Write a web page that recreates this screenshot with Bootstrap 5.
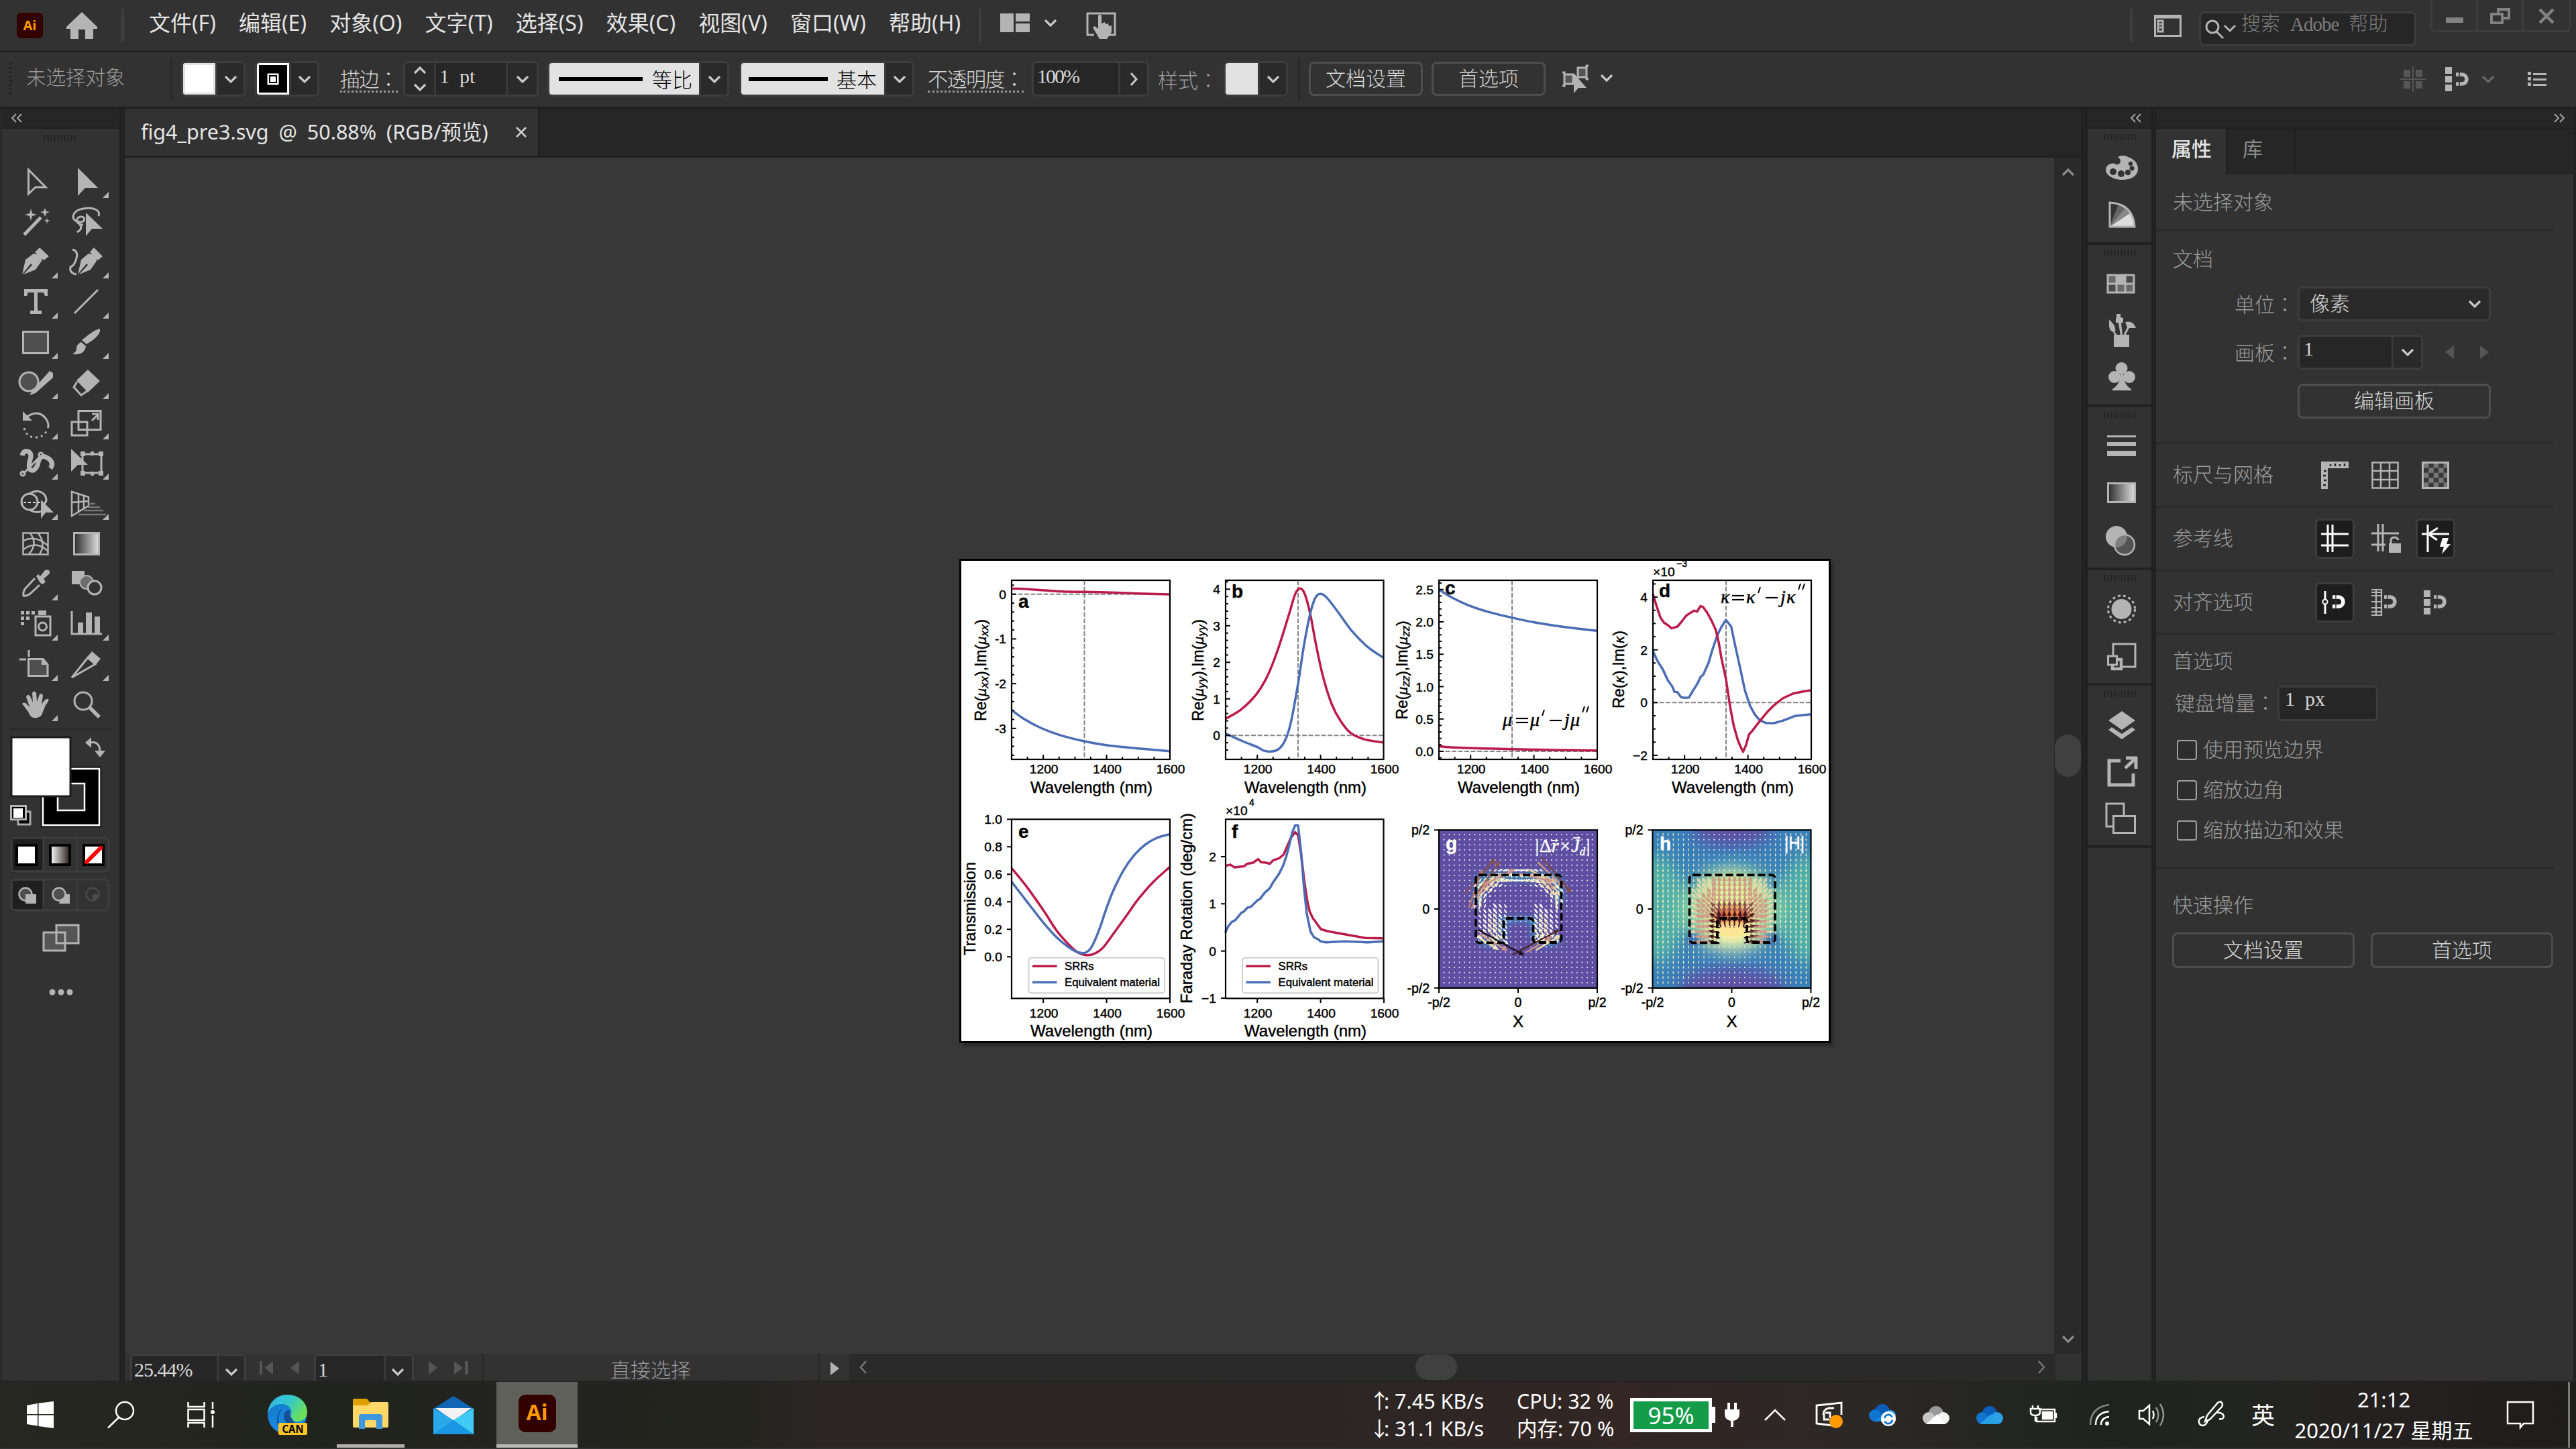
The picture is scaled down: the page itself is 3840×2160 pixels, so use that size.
<!DOCTYPE html>
<html lang="zh-CN">
<head>
<meta charset="utf-8">
<title>fig4_pre3.svg</title>
<meta name="viewport" content="width=device-width, initial-scale=1">
<link href="https://cdn.jsdelivr.net/npm/bootstrap@5.3.0/dist/css/bootstrap.min.css" rel="stylesheet">
<style>
html,body{width:3840px;height:2160px;overflow:hidden}
body{background:#323232;color:#9c9c9c;font:300 30px/36px "Liberation Serif","Noto Sans CJK SC",serif;margin:0}
svg{display:block;flex:none;overflow:visible}
.ui{font-family:"Noto Sans","Noto Sans CJK SC",sans-serif;font-weight:400;color:#e4e4e4}
.lt{color:#d6d6d6}
.num{letter-spacing:0;word-spacing:7.5px}
.cl{font-family:"Noto Sans CJK TC",sans-serif;font-style:normal;-webkit-locale:"zh-TW";font-feature-settings:"locl" 0}
.ic{fill:#b4b4b4;stroke:none}
.ln{fill:none;stroke:#b4b4b4;stroke-width:3}
.topbar{height:78px;border-bottom:3px solid #222}
.menus{gap:34.2px;font-size:32px;margin-left:38px;padding-bottom:8px}
.vsep{width:4px;height:50px;background:#3f3f3f;flex:none}
.vsep2{width:3px;height:62px;background:#292929;flex:none}
.srch{width:324px;height:52px;margin:10px 21px 0 25px;background:#262626;border:3px solid #3d3d3d;border-radius:8px;color:#7d7d7d}
.winb{width:210px;height:48px;border:3px solid #3d3d3d;border-top:0;border-radius:0 0 8px 8px;margin-right:7px}
.winb>*{width:69px;border-right:3px solid #3d3d3d}
.winb>*:last-child{border:0}
.ctl{height:84px;border-bottom:3px solid #202020;padding-bottom:2px}
.bx{height:53px;border:3px solid #3d3d3d;border-radius:7px;background:#262626;overflow:hidden;flex:none}
.bx>*+*{border-left:3px solid #3a3a3a}
.sw{background:#e2e2e2;flex:none;height:100%}
.dd{background:#2a2a2a}
.obtn{border:3px solid #4e4e4e;border-radius:8px;color:#d6d6d6;flex:none;padding:0}
.dot{border-bottom:3px dotted #9a9a9a;line-height:34px}
.work{height:1896px}
.tools{width:178px;border-left:3px solid #292929;flex:none}
.phead{height:30px;background:#262626;border-bottom:2px solid #202020;flex:none}
.tgrid{display:grid;grid-template-columns:70px 70px;column-gap:6px;grid-auto-rows:60px;padding:49px 0 0 15px}
.gut{width:8px;background:#262626;border-left:3px solid #1f1f1f;border-right:2px solid #1f1f1f;flex:none}
.tabs{height:73px;background:#262626;border-bottom:3px solid #202020}
.dtab{width:619px;background:#323232;border-right:3px solid #202020;padding-left:24px;font-size:31px}
.stage{background:#383838;position:relative;flex:1}
.artb{position:absolute;left:1244px;top:598px;width:1299px;height:722px;background:#fff;border:3px solid #000;box-shadow:4px 5px 3px #2b2b2b}
.vbar{width:41px;background:#2a2a2a;flex:none}
.vth{width:39px;height:63px;border-radius:20px;background:#404040}
.stat{height:40px;overflow:hidden;background:#323232}
.stat .bx{height:50px;align-self:flex-start}
.hbar{background:#2a2a2a;width:1798px}
.hth{width:62px;height:38px;border-radius:19px;background:#404040}
.strip{width:97px;border-left:2px solid #1f1f1f;flex:none}
.props{width:626px;flex:none;border-right:4px solid #222}
.ptab{height:68px;background:#262626;flex:none}
.pt{padding-top:12px;border-right:3px solid #202020}
.hr2{height:3px;background:#2a2a2a;width:594px;margin:0;flex:none}
.ttl{padding-left:25px}
.on{width:59px;height:60px;background:#1d1d1d;border:3px solid #3d3d3d;border-radius:7px}
.cb{width:30px;height:30px;border:2.5px solid #a0a0a0;border-radius:4px;background:#2d2d2d}
.task{height:100px;background:linear-gradient(90deg,#272722 0,#21241c 12%,#23231f 20%,#22241d 28%,#2b2624 32%,#2b2625 52%,#332624 63%,#2c2826 72%,#1e241d 82%,#232421 88%,#24201f 94%,#1d1d1c 100%);border-top:2px solid #242424}
.tk{font:400 30.5px/41px "Noto Sans","Noto Sans CJK SC",sans-serif;color:#fff}
.arw{display:inline-block;width:15px;text-indent:-7px}
.aibg{width:121px;height:98px;background:#5f605a;border-bottom:5px solid #b9b8b5}
.aib{background:#330000;color:#ff9a00;font-family:"Open Sans",sans-serif;font-weight:700}
.fg text{font-family:"Liberation Sans",sans-serif;font-weight:400;fill:#000;stroke:#000;stroke-width:.45px}
.fg .wt{fill:#fff;stroke:#fff}
.fg .pl{font-weight:700;font-size:28px}
.fg .eq{font-family:"Liberation Serif",serif;font-style:italic;font-size:28px}
</style>
<script src="https://cdn.jsdelivr.net/npm/bootstrap@5.3.0/dist/js/bootstrap.bundle.min.js"></script>
</head>
<body>
<svg width="0" height="0" class="position-absolute"><defs>
<symbol id="dn" viewBox="0 0 20 14"><path d="M2 3l8 8 8-8" fill="none" stroke="#c8c8c8" stroke-width="3.2"/></symbol>
<symbol id="grip" viewBox="0 0 48 9"><path d="M1.5 0v9M6.500 0v9M11.500 0v9M16.500 0v9M21.500 0v9M26.500 0v9M31.500 0v9M36.500 0v9M41.500 0v9M46.500 0v9" stroke="#222" stroke-width="2"/></symbol>
<symbol id="dl" viewBox="0 0 18 14"><path d="M8 1L2 7l6 6M16 1l-6 6 6 6" fill="none" stroke="#aaa" stroke-width="1.8"/></symbol>
<symbol id="mag" viewBox="0 0 20 20"><path d="M0 3h9a7 7 0 0 1 0 14H0" fill="none" stroke="currentColor" stroke-width="5.500"/><path d="M5 0v20" stroke="#323232" stroke-width="1.500"/></symbol>
<linearGradient id="gr"><stop offset="0" stop-color="#2b2b2b"/><stop offset="1" stop-color="#e0e0e0"/></linearGradient>
</defs></svg>

<!-- menu bar -->
<nav class="topbar d-flex align-items-center">
 <div class="aib d-flex align-items-center justify-content-center rounded-2" style="width:39px;height:38px;margin-left:25px;font-size:20px">Ai</div>
 <svg width="46" height="40" viewBox="0 0 46 40" style="margin-left:35px"><path class="ic" d="M23 0L46 22v3H40v15H28V26H18V40H6V25H0v-3z"/></svg>
 <div class="vsep" style="margin-left:36px"></div>
 <div class="menus ui d-flex" style="margin-left:37px"><span>文件(F)</span><span>编辑(E)</span><span>对象(O)</span><span>文字(T)</span><span>选择(S)</span><span>效果(C)</span><span>视图(V)</span><span>窗口(W)</span><span>帮助(H)</span></div>
 <div class="vsep" style="margin-left:27px"></div>
 <svg width="44" height="28" style="margin-left:28px;margin-top:-7px"><path class="ic" d="M0 0h20v28H0zM23 0h21v12H23zM23 15h21v13H23z"/></svg>
 <svg width="20" height="14" style="margin-left:21px;margin-top:-7px"><use href="#dn"/></svg>
 <svg width="46" height="40" style="margin-left:43px"><path class="ln" d="M12 34H2V2H43V34H34" stroke-width="4"/><path class="ic" d="M18 6c0-3 5-3 5 0v11l5-2 1 3 4-1 1 4 4-1v10l-7 10H20L10 23l3-2 5 4z"/></svg>
 <div class="vsep ms-auto"></div>
 <svg width="42" height="33" style="margin-left:32px;margin-top:2px"><path class="ln" d="M1.500 1.500h38v30h-38zM1 4h39"/><path d="M6 9h7v16H6z" class="ln" stroke-width="2"/><path d="M8 14h3M8 19h3" class="ln" stroke-width="2"/></svg>
 <div class="srch d-flex align-items-start">
  <svg width="48" height="30" style="margin:9px 6px 0 6px"><circle class="ln" cx="11" cy="11" r="9"/><path class="ln" d="M17 18l10 10M29 9l8 8 8-8"/></svg><span class="text-nowrap" style="margin-top:-2px;font-size:29px">搜索<span style="letter-spacing:-1px;margin:0 15px">Adobe</span>帮助</span></div>
 <div class="winb d-flex align-self-start"><div class="d-flex justify-content-center"><svg width="26" height="8" style="margin-top:26px"><path fill="#828282" d="M0 0h26v8H0z"/></svg></div><div class="d-flex justify-content-center"><svg width="30" height="26" style="margin-top:11px" fill="none" stroke="#828282" stroke-width="4"><path d="M2 10h16v13H2zM12 10V3h16v13h-9"/></svg></div><div class="d-flex justify-content-center"><svg width="24" height="20" style="margin-top:14px"><path d="M2 0l20 20M22 0L2 20" stroke="#828282" stroke-width="4.500"/></svg></div></div>
</nav>

<!-- control bar -->
<div class="ctl d-flex align-items-center text-nowrap">
 <svg width="5" height="48" style="margin-left:13px"><path d="M2.500 0v48" stroke="#202020" stroke-width="4" stroke-dasharray="2.500 3.800"/></svg>
 <span style="margin-left:21px;width:215px;margin-top:-3px;font-size:29.5px">未选择对象</span>
 <div class="vsep2"></div>
 <div class="bx d-flex" style="width:96px;margin-left:13px"><div class="sw" style="width:48px;background:#fff;border:3px solid #e2e2e2"></div><div class="dd d-flex flex-fill align-items-center justify-content-center"><svg width="20" height="14"><use href="#dn"/></svg></div></div>
 <div class="bx d-flex" style="width:96px;margin-left:14px"><svg width="48" height="47"><path fill="#000" stroke="#fff" stroke-width="3" d="M1.500 1.500h45v44h-45z"/><path d="M17 17h14v14H17z" fill="#fff" stroke="#fff" stroke-width="3"/><path d="M19 19h10v10H19z" stroke="#000" stroke-width="2" fill="#fff"/></svg><div class="dd d-flex flex-fill align-items-center justify-content-center"><svg width="20" height="14"><use href="#dn"/></svg></div></div>
 <span class="lt" style="margin-left:31px;width:94px"><span class="dot" style="letter-spacing:-1.500px">描边<i class="cl">：</i></span></span>
 <div class="bx d-flex" style="width:202px"><div class="dd d-flex flex-column align-items-center justify-content-between py-1" style="width:43px"><svg width="20" height="14" style="transform:rotate(180deg)"><use href="#dn"/></svg><svg width="20" height="14"><use href="#dn"/></svg></div><div class="lt num flex-fill" style="padding:2px 0 0 5px">1 pt</div><div class="dd d-flex align-items-center justify-content-center" style="width:46px"><svg width="20" height="14"><use href="#dn"/></svg></div></div>
 <div class="bx d-flex" style="width:271px;margin-left:13px"><div class="sw d-flex align-items-center text-black" style="width:223px;padding-left:14px"><svg width="125" height="6"><path d="M0 0h125v6H0z"/></svg><span style="margin:4px 0 0 14px">等比</span></div><div class="dd d-flex flex-fill align-items-center justify-content-center"><svg width="20" height="14"><use href="#dn"/></svg></div></div>
 <div class="bx d-flex" style="width:261px;margin-left:15px"><div class="sw d-flex align-items-center text-black" style="width:213px;padding-left:11px"><svg width="118" height="6"><path d="M0 0h118v6H0z"/></svg><span style="margin:4px 0 0 13px">基本</span></div><div class="dd d-flex flex-fill align-items-center justify-content-center"><svg width="20" height="14"><use href="#dn"/></svg></div></div>
 <span class="lt" style="margin-left:20px;width:155px"><span class="dot" style="letter-spacing:-1.500px">不透明度<i class="cl">：</i></span></span>
 <div class="bx d-flex" style="width:175px"><div class="lt" style="width:126px;padding:2px 0 0 5px;letter-spacing:-2px">100%</div><div class="dd d-flex flex-fill align-items-center justify-content-center"><svg width="12" height="20"><path d="M2 1l8 9-8 9" fill="none" stroke="#c8c8c8" stroke-width="3"/></svg></div></div>
 <span style="margin-left:13px;width:98px;margin-top:3px">样式<i class="cl">：</i></span>
 <div class="bx d-flex" style="width:96px"><div class="sw" style="width:48px"></div><div class="dd d-flex flex-fill align-items-center justify-content-center"><svg width="20" height="14"><use href="#dn"/></svg></div></div>
 <div class="vsep2" style="margin-left:15px"></div>
 <button class="btn obtn" style="width:170px;height:51px;margin-left:13px;font:inherit;font-size:30px">文档设置</button>
 <button class="btn obtn" style="width:170px;height:51px;margin-left:13px;font:inherit;font-size:30px">首选项</button>
 <svg width="42" height="42" style="margin-left:24px"><path d="M4 14h13v14H4zM24 4h13v14H24z" fill="#555" stroke="#b4b4b4" stroke-width="3"/><path d="M1 11h3v3M1 31h3v-3M40 1h-3v3M40 21h-3v-3" class="ln"/><path class="ic" d="M18 12v30l7-8h12z" stroke="#323232"/></svg>
 <svg width="20" height="14" style="margin-left:15px;margin-top:-3px"><use href="#dn"/></svg>
 <svg width="38" height="38" class="ms-auto"><path fill="#565656" d="M5 5h10v11H5zM23 5h10v11H23zM5 22h10v11H5zM23 22h10v11H23zM18 0h2v38h-2zM0 18h38v2H0z"/></svg>
 <svg width="36" height="36" style="margin-left:29px" color="#b4b4b4"><path class="ic" d="M0 0h10v10H0zM0 13h10v10H0zM0 26h10v10H0z"/><use href="#mag" x="16" y="8" width="20" height="20"/></svg>
 <svg width="20" height="14" style="margin:0 49px 0 18px" opacity=".35"><use href="#dn"/></svg>
 <svg width="28" height="22" style="margin-right:44px"><path class="ic" d="M0 0h5v5H0zM0 8h5v5H0zM0 16h5v5H0zM8 2h20v3H8zM8 10h20v3H8zM8 18h20v3H8z"/></svg>
</div>

<div class="work d-flex">
 <!-- toolbox -->
 <aside class="tools d-flex flex-column">
  <div class="phead d-flex align-items-center" style="padding-left:13px"><svg width="18" height="14"><use href="#dl"/></svg></div>
  <svg width="48" height="9" style="margin:9px 0 -18px 62px"><use href="#grip"/></svg>
  <div class="tgrid" id="tg"></div>
  <svg width="178" height="420" viewBox="0 1081 178 420" style="margin-left:-3px">
   <path d="M15 1087h151" stroke="#282828" stroke-width="2"/>
   <path d="M62 1144h88v88H62z" fill="#000" stroke="#1c1c1c" stroke-width="3"/><path d="M64 1146h84v84H64z" fill="#000" stroke="#fff" stroke-width="2.500"/><path d="M86 1168h40v40H86z" fill="#323232" stroke="#fff" stroke-width="2.500"/>
   <path d="M17 1099h88v88H17z" fill="#fff" stroke="#1c1c1c" stroke-width="3"/>
   <path class="ln" d="M134 1107c11-2 15 4 15 14" stroke-width="4"/><path class="ic" d="M127 1107l9-8v16zM141 1119h16l-8 10z"/>
   <path d="M27 1210h18v19H27z" fill="#000" stroke="#aaa" stroke-width="3"/><path d="M18 1203h18v18H18z" fill="#fff" stroke="#000" stroke-width="4"/><path d="M16.500 1201.500h22v20h-22z" class="ln" stroke-width="2"/>
   <g fill="none" stroke="#3d3d3d" stroke-width="3"><rect x="17" y="1249" width="145" height="50" rx="7"/><rect x="17" y="1311" width="145" height="46" rx="7"/></g>
   <path fill="#1f1f1f" d="M19 1251h44v46H19zM19 1313h44v42H19z"/><path d="M65 1250v48M115 1250v48M65 1312v44M115 1312v44" stroke="#3d3d3d" stroke-width="2"/>
   <path d="M25 1260h29v29H25z" fill="#fff" stroke="#000" stroke-width="4"/><path d="M75 1260h29v29H75z" fill="url(#gw)" stroke="#000" stroke-width="4"/><linearGradient id="gw"><stop stop-color="#fff"/><stop offset="1" stop-color="#2a2120"/></linearGradient>
   <path d="M125 1260h29v29h-29z" fill="#fff" stroke="#000" stroke-width="4"/><path d="M127 1287l25-25" stroke="#f00" stroke-width="6"/>
   <g stroke="#b4b4b4" stroke-width="2.500" fill="#4f4f4f"><circle cx="38" cy="1333" r="9.500"/><circle cx="88" cy="1333" r="9.500"/></g><path class="ic" d="M38 1333h16v14H38zM90 1340c5 0 7-4 7-7h7v14H88z"/><circle cx="138" cy="1333" r="9.500" fill="none" stroke="#4a4a4a" stroke-width="2.500"/><path d="M138 1333h10l-3 8h-7z" fill="#4a4a4a"/>
   <path d="M65 1390h32v27H65zM84 1379h33v27H84z" fill="#555" stroke="#b4b4b4" stroke-width="3"/>
   <g class="ic"><circle cx="78" cy="1479" r="4.500"/><circle cx="91" cy="1479" r="4.500"/><circle cx="104" cy="1479" r="4.500"/></g>
  </svg>
 </aside>
 <div class="gut"></div>
 <!-- document -->
 <main class="d-flex flex-column flex-fill">
  <div class="tabs d-flex"><div class="dtab ui d-flex align-items-center text-nowrap"><span style="width:563px;word-spacing:7px;font-size:30.500px;margin-top:-2px">fig4_pre3.svg @ 50.88% (RGB/预览)</span><svg width="14" height="14" style="margin-left:-3px"><path d="M0 0l14 14M14 0L0 14" stroke="#d0d0d0" stroke-width="2.500"/></svg></div></div>
  <div class="d-flex flex-fill">
   <div class="stage"><div class="artb"><svg class="fg" id="fig" width="1293" height="716" viewBox="1434 837 1293 716"></svg></div></div>
   <div class="vbar d-flex flex-column align-items-center justify-content-between" style="padding:15px 0"><svg width="20" height="14" style="transform:rotate(180deg)" opacity=".6"><use href="#dn"/></svg><div class="vth"></div><svg width="20" height="14" opacity=".6"><use href="#dn"/></svg></div>
  </div>
  <div class="stat d-flex align-items-center">
   <div class="bx d-flex" style="width:173px;margin-left:8px"><div class="lt" style="width:126px;padding:3px 0 0 3px;letter-spacing:-1px">25.44%</div><div class="dd flex-fill" style="padding:17px 0 0 9px"><svg width="20" height="14" class="border-0"><use href="#dn"/></svg></div></div>
   <svg width="64" height="20" style="margin-left:20px;margin-top:2px"><path fill="#555" d="M0 0h4v20H0zM20 0v20L7 10zM59 0v20L46 10z"/></svg>
   <div class="bx d-flex" style="width:149px;margin-left:17px"><div class="lt" style="width:101px;padding:3px 0 0 3px">1</div><div class="dd flex-fill" style="padding:17px 0 0 8px"><svg width="20" height="14" class="border-0"><use href="#dn"/></svg></div></div>
   <svg width="62" height="20" style="margin-left:22px;margin-top:2px"><path fill="#555" d="M0 0v20l13-10zM38 0v20l13-10zM54 0h5v20h-5z"/></svg>
   <div class="vsep2" style="margin-left:17px"></div><div class="text-center text-nowrap" style="width:498px;padding:10px 0 0 0">直接选择</div><div class="vsep2"></div>
   <svg width="14" height="20" style="margin:4px 14px 0 16px"><path class="ic" d="M0 0v20l13-10z"/></svg>
   <div class="hbar d-flex align-items-center h-100"><svg width="12" height="20" style="margin-left:15px"><path d="M10 1l-8 9 8 9" fill="none" stroke="#777" stroke-width="2.500"/></svg><div class="hth" style="margin-left:817px"></div><svg width="12" height="20" class="ms-auto" style="margin-right:15px"><path d="M2 1l8 9-8 9" fill="none" stroke="#777" stroke-width="2.500"/></svg></div>
  </div>
 </main>
 <div class="gut" style="width:7px"></div>
 <!-- icon dock -->
 <aside class="strip d-flex flex-column">
  <div class="phead d-flex align-items-center justify-content-end" style="padding-right:14px"><svg width="18" height="14"><use href="#dl"/></svg></div>
  <svg width="94" height="1072" viewBox="3112 193 94 1072" class="mx-auto">
   <path d="M3110 364h98M3110 606h98M3110 849h98M3110 1021h98M3110 1263h98" stroke="#222" stroke-width="4"/>
   <use href="#grip" x="3135" y="201" width="48" height="9"/><use href="#grip" x="3135" y="373" width="48" height="9"/><use href="#grip" x="3135" y="616" width="48" height="9"/><use href="#grip" x="3135" y="858" width="48" height="9"/><use href="#grip" x="3135" y="1031" width="48" height="9"/>
   <path class="ic" d="M3157 236c-3-2 8-5 14-1 10 3 15 10 15 18 0 10-10 16-23 16-14 0-25-7-25-15 0-7 9-12 15-8 6 2 10-6 4-10z"/><g fill="#323232"><circle cx="3149" cy="257" r="5"/><circle cx="3161" cy="260" r="5"/><circle cx="3171" cy="258" r="4.200"/><circle cx="3177" cy="252" r="3.500"/><circle cx="3175" cy="245" r="3.200"/></g>
   <path d="M3144 303v36h37q-2-34-37-36z" fill="#888"/><path d="M3144 339v-36q8 1 13 3z" fill="#333"/><path d="M3144 339l13-33q5 2 9 6z" fill="#666"/><path d="M3144 339l30-20q6 9 7 20z" fill="#ddd"/><path d="M3144 303v36h37q-2-34-37-36z" class="ln" stroke-width="2.500"/>
   <path d="M3141 411h39v26h-39z" fill="#6a6a6a"/><path fill="#4a4a4a" d="M3141 424h13v13h-13zM3167 411h13v13h-13z"/><path fill="#b4b4b4" d="M3154 411h13v13h-13z"/><path class="ln" stroke-width="2.200" d="M3141 411h39v26h-39zM3141 424h39M3154 411v26M3167 411v26"/>
   <path class="ic" d="M3150 500h23v18h-23zM3143 477c3 4 9 8 9 14 1 3 0 4-1 4l7 10h-3l-7-10c-6-2-5-10-5-18zM3154 469h6v5l4 1v7h-3l2 20h-3l-3-20h-4v-7l1-1zM3167 481q12-3 16 9h-10l-7 13h-3l7-14z"/>
   <g class="ic"><circle cx="3161.500" cy="550" r="9"/><circle cx="3151" cy="563" r="9"/><circle cx="3173" cy="563" r="9"/><path d="M3160 556h4q0 18 12 25v2h-28v-2q12-7 12-25z"/></g>
   <path class="ic" d="M3140 650h43v3h-43zM3140 660h43v6h-43zM3140 673h43v8h-43z"/>
   <path d="M3141.500 721.500h40v28h-40z" fill="url(#gr)" stroke="#b4b4b4" stroke-width="3"/>
   <circle class="ic" cx="3154" cy="801" r="16"/><circle cx="3166" cy="813" r="15" fill="#666a" stroke="#b4b4b4" stroke-width="2.500"/>
   <circle class="ic" cx="3161.500" cy="909" r="15"/><circle class="ln" cx="3161.500" cy="909" r="20" stroke-dasharray="4 4" stroke-width="2.500"/>
   <path class="ln" stroke-width="2.500" d="M3149 979v-18h33v34h-22"/><path class="ln" d="M3148 989v9h13v-14h-6" style="stroke-width:4.500"/><path class="ln" d="M3141.500 979h13v13h-13z" style="fill:#323232"/>
   <path class="ic" d="M3162 1061l20 14-20 14-20-14zM3147 1085l15 10 15-10 5 4-20 14-20-14z"/>
   <path class="ln" style="stroke-width:5" d="M3160 1135h-17v36h36v-17M3168 1131h15v16M3182 1132l-15 14"/>
   <path class="ln" d="M3148 1233h-9v-34h26v17M3149.500 1217.500h32v25h-32z" stroke-width="2.500"/>
  </svg>
 </aside>
 <div class="gut" style="width:7px"></div>
 <!-- properties -->
 <aside class="props d-flex flex-column text-nowrap">
  <div class="phead d-flex align-items-center justify-content-end" style="padding-right:12px"><svg width="18" height="14" style="transform:scaleX(-1)"><use href="#dl"/></svg></div>
  <div class="ptab d-flex ui" style="font-size:30px"><div class="pt" style="width:107px;background:#323232;padding-left:23px;font-weight:500">属性</div><div class="pt" style="width:101px;padding-left:22px;color:#8a8a8a">库</div></div>
  <div class="ttl" style="height:81px;padding-top:24px">未选择对象</div>
  <div class="hr2"></div>
  <div class="ttl" style="height:82px;padding-top:25px">文档</div>
  <div class="d-flex align-items-center" style="height:52px;margin-top:1px"><span style="width:211px;padding-left:117px">单位<i class="cl">：</i></span><div class="bx dd lt d-flex align-items-center justify-content-between" style="width:288px;height:52px;padding:0 11px 0 15px"><span>像素</span><svg width="20" height="14" class="border-0"><use href="#dn"/></svg></div></div>
  <div class="d-flex align-items-center" style="height:52px;margin-top:20px"><span style="width:211px;padding-left:117px">画板<i class="cl">：</i></span><div class="bx d-flex" style="width:187px;height:52px"><div class="lt" style="width:137px;padding:0 0 0 6px">1</div><div class="dd d-flex flex-fill align-items-center justify-content-center"><svg width="20" height="14" class="border-0"><use href="#dn"/></svg></div></div><svg width="66" height="20" style="margin-left:33px"><path fill="#555" d="M13 0v20L0 10zM52 0v20l13-10z"/></svg></div>
  <button class="btn obtn" style="width:288px;height:52px;margin:21px 0 35px 211px;font:inherit;font-size:30px">编辑画板</button>
  <div class="hr2"></div>
  <div class="d-flex align-items-center" style="height:92px"><span class="ttl" style="width:246px">标尺与网格</span>
   <svg width="41" height="41"><path class="ic" d="M0 0h41v10H10v31H0z"/><path d="M14 7V4M21 7V3M28 7V4M35 7V3M4 14h4M3 21h4M4 28h4M3 35h4" stroke="#222" stroke-width="2.500"/></svg>
   <svg width="41" height="41" style="margin-left:34px"><path class="ln" style="stroke-width:2.500" d="M1.500 1.500h38v38h-38zM1 14h39M1 27h39M14 1v39M27 1v39"/></svg>
   <svg width="41" height="41" style="margin-left:34px"><path d="M2 2h37v37H2z" fill="#383838"/><path d="M3 5.700h36M3 20.500h36M3 35h36" stroke="#777" stroke-width="7.400" stroke-dasharray="7.400"/><path d="M10.400 13h30M10.400 28h30" stroke="#777" stroke-width="7.400" stroke-dasharray="7.400"/><path class="ln" d="M1.500 1.500h38v38h-38z"/></svg></div>
  <div class="hr2"></div>
  <div class="d-flex align-items-center" style="height:92px"><span class="ttl" style="width:237px">参考线</span>
   <div class="on"><svg width="41" height="41" style="margin:6px"><path d="M0 14h41M0 31h41M10 0v41M17 0v41" stroke="#fff" stroke-width="3"/></svg></div>
   <svg width="44" height="44" style="margin-left:25px"><path class="ln" d="M0 14h41M0 31h21M10 0v41M17 0v41"/><path class="ic" d="M26 29h18v14H26z"/><path class="ln" d="M29 29v-4q0-5 5-5t6 4"/></svg>
   <div class="on" style="margin-left:22px"><svg width="44" height="44" style="margin:6px"><path d="M0 14h41M9 0v41M24 5L10 14l13 9" stroke="#fff" stroke-width="3" fill="none"/><path fill="#fff" d="M31 20h9l-3 9h6L30 44l3-11h-6z"/></svg></div></div>
  <div class="hr2"></div>
  <div class="d-flex align-items-center" style="height:91px"><span class="ttl" style="width:237px">对齐选项</span>
   <div class="on"><svg width="41" height="41" style="margin:6px" color="#fff"><path d="M6 4v34" stroke="#fff" stroke-width="3"/><circle cx="6" cy="20" r="3.500" fill="#222" stroke="#fff" stroke-width="2"/><use href="#mag" x="17" y="10" width="20" height="20"/></svg></div>
   <svg width="40" height="42" style="margin-left:25px" color="#b4b4b4"><path class="ln" style="stroke-width:2.200" d="M0 2h15v38H0M0 11h15M0 20h15M0 29h15M7 2v38M0 6h15M0 35h15"/><use href="#mag" x="19" y="10" width="20" height="20"/></svg>
   <svg width="36" height="36" style="margin-left:38px" color="#b4b4b4"><path class="ic" d="M0 0h10v10H0zM0 13h10v10H0zM0 26h10v10H0z"/><use href="#mag" x="15" y="7" width="20" height="20"/></svg></div>
  <div class="hr2"></div>
  <div class="ttl" style="height:76px;padding-top:22px">首选项</div>
  <div class="d-flex align-items-center" style="height:53px"><span style="width:181px;padding-left:28px;margin-top:-3px">键盘增量<i class="cl">：</i></span><div class="bx lt num" style="width:150px;height:53px;padding-left:8px;line-height:34px">1 px</div></div>
  <label class="d-flex align-items-center" style="height:60px;margin-top:13px"><span class="cb" style="margin:0 9px 0 31px"></span>使用预览边界</label>
  <label class="d-flex align-items-center" style="height:60px"><span class="cb" style="margin:0 9px 0 31px"></span>缩放边角</label>
  <label class="d-flex align-items-center" style="height:60px;margin-bottom:24px"><span class="cb" style="margin:0 9px 0 31px"></span>缩放描边和效果</label>
  <div class="hr2"></div>
  <div class="ttl" style="height:95px;padding-top:37px">快速操作</div>
  <div class="d-flex" style="gap:24px;padding-left:24px"><button class="btn obtn" style="width:272px;height:53px;font:inherit;font-size:30px">文档设置</button><button class="btn obtn" style="width:272px;height:53px;font:inherit;font-size:30px">首选项</button></div>
 </aside>
</div>

<!-- taskbar -->
<footer class="task d-flex align-items-center text-nowrap">
 <svg width="40" height="40" style="margin-left:40px"><path fill="#fff" d="M0 6l16-3v16H0zM17.500 2.700L40 0v19H17.500zM0 20.500h16v16L0 34zM17.500 20.500H40V40l-22.500-3z"/></svg>
 <svg width="40" height="40" style="margin-left:80px" fill="none" stroke="#fff" stroke-width="2.500"><circle cx="26" cy="14" r="13"/><path d="M17 24L1 39.500"/></svg>
 <svg width="42" height="40" style="margin-left:79px" fill="none" stroke="#fff" stroke-width="2.500"><path d="M1.500 12h24v16h-24zM1.500 1v7h24V1M1.500 39v-7h24v7M38 1v10M38 21v18"/><circle cx="38" cy="16" r="3" fill="#fff" stroke="none"/></svg>
 <svg width="60" height="60" viewBox="0 0 60 60" style="margin-left:77px"><defs><linearGradient id="e1" x2="1" y2=".5"><stop stop-color="#2fb4f0"/><stop offset=".55" stop-color="#36c9c9"/><stop offset="1" stop-color="#6be05a"/></linearGradient><linearGradient id="e2" x2=".6" y2="1"><stop stop-color="#1276c4"/><stop offset="1" stop-color="#1a8fe8"/></linearGradient></defs><circle cx="30" cy="30" r="29" fill="url(#e2)"/><path d="M1 29C2 12 14 0 30 0c18 0 30 12 30 26 0 9-7 14-15 14-8 0-12-3-10-7 4-6 1-19-13-19C12 14 3 20 1 29z" fill="url(#e1)"/><path d="M24 22c-10 6-10 26 8 34-14-2-20-14-16-26 1-4 4-8 8-8z" fill="#0e55a5"/><path d="M36 34c-3-3-3-7-1-11-8-1-12 6-9 14 3 9 14 14 26 10-8 2-12-8-16-13z" fill="#174f94"/><rect x="17" y="42" width="43" height="18" rx="2" fill="#ffc425"/><text x="38.500" y="57" font-size="16" font-weight="700" text-anchor="middle" font-family="Noto Sans" fill="#000" textLength="32" lengthAdjust="spacingAndGlyphs">CAN</text></svg>
 <div class="d-flex flex-column justify-content-end align-items-center align-self-stretch" style="width:101px;margin-left:44px"><svg width="54" height="46" style="margin-bottom:22px"><path fill="#e0a000" d="M0 2q0-2 2-2h19l5 6v10H0z"/><path fill="#ffd868" d="M0 10h22l5-5h24q2 0 2 2v34q0 2-2 2H2q-2 0-2-2z"/><path fill="#3f97dc" d="M9 45V27q0-4 4-4h27q4 0 4 4v18h-9V34q0-2-3-2H21q-3 0-3 2v11z"/></svg><div style="width:101px;height:5px;background:#b4b0ad"></div></div>
 <svg width="60" height="57" style="margin-left:43px"><path fill="#1065b5" d="M0 19L30 0l30 19v10H0z"/><path fill="#f3f3f3" d="M3 18h54L30 37z"/><path fill="#28aaea" d="M0 18l30 18 30-18v39H0z"/><path fill="#3fcbf5" d="M60 18v39L30 36z"/><path fill="#1490df" d="M0 57l30-21 30 21z" opacity=".75"/></svg>
 <div class="aibg d-flex align-items-center justify-content-center" style="margin-left:34px"><div class="aib d-flex align-items-center justify-content-center" style="width:56px;height:56px;border-radius:10px;font-size:32px;padding-bottom:3px">Ai</div></div>
 <div class="tk" style="margin-left:1187px;width:213px"><div><span class="arw">↑</span>: 7.45 KB/s</div><div><span class="arw">↓</span>: 31.1 KB/s</div></div>
 <div class="tk" style="width:169px"><div>CPU: 32 %</div><div>内存: 70 %</div></div>
 <div class="d-flex align-items-center"><div class="tk d-flex align-items-center justify-content-center" style="width:122px;height:51px;background:#159c49;border:5px solid #fff;font-size:35px">95%</div><div class="bg-white" style="width:5px;height:24px"></div></div>
 <svg width="22" height="38" style="margin-left:14px" fill="#fff"><path d="M4 1h4v10h6V1h4v10h4v7q0 8-9 10v9H9v-9Q0 26 0 18v-7h4z"/></svg>
 <svg width="32" height="18" style="margin-left:37px" fill="none" stroke="#fff" stroke-width="2.500"><path d="M1 17L16 2l15 15"/></svg>
 <svg width="42" height="40" style="margin-left:44px" fill="none" stroke="#fff" stroke-width="2.800"><path d="M26 36L2 33V6l37-4v18M22 25v-8h-7M12 20q0-8 8-10h8M13 18v9h8"/><circle cx="31" cy="30" r="10" fill="#ff9a00" stroke="none"/></svg>
 <svg width="41" height="34" style="margin-left:38px"><circle cx="20" cy="12" r="11" fill="#0a5eb8"/><circle cx="9" cy="18" r="9" fill="#1174cf"/><circle cx="32" cy="18" r="8" fill="#2aa3e8"/><path fill="#1485dc" d="M8 27L22 14l12 13z"/><circle cx="29" cy="23" r="11" fill="#fff"/><path d="M23 22q2-6 8-5l4 3M35 25q-2 6-8 5l-4-3" fill="none" stroke="#1174cf" stroke-width="2.800"/></svg>
 <svg width="41" height="27" style="margin-left:39px"><circle cx="20" cy="11" r="11" fill="#999"/><circle cx="9" cy="18" r="9" fill="#c6c6c6"/><circle cx="31" cy="18" r="9" fill="#f4f4f4"/><path fill="#fff" d="M5 27l17-15 12 15z"/></svg>
 <svg width="41" height="27" style="margin-left:39px"><circle cx="20" cy="11" r="11" fill="#0a5eb8"/><circle cx="9" cy="18" r="9" fill="#1174cf"/><circle cx="31" cy="18" r="9" fill="#2aa3e8"/><path fill="#28a0e6" d="M5 27l17-15 12 15z"/></svg>
 <svg width="42" height="30" style="margin-left:39px" fill="none" stroke="#fff" stroke-width="2.500"><path d="M16 7h21v18H10v-7M39 12v8M4 1v5M12 1v5M1 6h14v5q0 5-7 5t-7-5zM8 16v9"/><path fill="#fff" d="M19 11h14v10H19z"/></svg>
 <svg width="32" height="34" style="margin-left:46px" fill="none" stroke="#fff" stroke-width="2.500"><path d="M2 32Q2 6 30 2" opacity=".45"/><path d="M10 32q0-18 20-20M18 32q0-11 12-12"/><circle cx="27" cy="30" r="3" fill="#fff" stroke="none"/></svg>
 <svg width="42" height="36" style="margin-left:42px" fill="none" stroke="#fff" stroke-width="2.500"><path d="M1 12h6l9-8v28l-9-8H1zM21 12q3 6 0 12"/><path d="M26 7q7 11 0 22M32 2q10 16 0 32" opacity=".5"/></svg>
 <svg width="42" height="42" style="margin-left:46px" fill="none" stroke="#fff" stroke-width="2.500"><path d="M14 22L30 3q4-3 6 0t0 6L18 28l-7 3zM10 24q-9 1-8 8 1 5 6 5 4 0 7-7M27 18q10-1 12 5-1 6-7 4"/></svg>
 <span class="tk" style="margin-left:38px;font-size:35px">英</span>
 <div class="tk text-center" style="margin-left:25px;width:275px;font-size:31px;line-height:46px"><div>21:12</div><div>2020/11/27 星期五</div></div>
 <svg width="42" height="42" style="margin-left:45px" fill="none" stroke="#fff" stroke-width="2.500"><path d="M2 2h38v32H26l-5 6v-6H2z"/></svg>
 <div style="margin-left:50px;width:3px;height:98px;background:#777"></div>
</footer>

<script>
// toolbox icons, each drawn round its own centre; a trailing 1 adds the flyout corner
const T=[
['<path class="ln" d="M-10.500 -18V18L0 8H15z"/>',0],
['<path class="ic" d="M-13 -21V21L-2 9H17z"/>',1],
['<path d="M-17 19L8 -7" stroke="#b4b4b4" stroke-width="5"/><path class="ic" d="M-7 -20l2 7 7 2-7 2-2 7-2-7-7-2 7-2zM14 -21l2 5 5 1-5 2-2 5-2-5-5-2 5-1zM17 -6l1 3 4 1-4 1-1 4-1-4-4-1 4-1z"/>',0],
['<path class="ln" d="M18 -9C22 -20 5 -22 -5 -20-22 -17-24 -4-14 -1-2 3 0 -8-8 -8s-10 12 3 12M-10 4q5 6-4 11"/><path class="ic" d="M-1 -14V21L8 10H24z"/>',0],
['<path class="ic" d="M-20 18L-15 -4-3 -13 9 -10 9 -2 0 11-18 18-5 4-7 2zM-1 -15L6 -22 20 -9 12 -3z"/>',1],
['<path class="ic" d="M-13 18L-8 -4 3 -13 15 -10 15 -2 6 11-11 18 2 4 0 2zM5 -15L11 -22 24 -9 17 -3z"/><path class="ln" d="M-21 -19q9 2 6 13t-9 13q-2 9 9 11"/>',1],
['<path class="ic" d="M-17 -20H18v10h-4l-2-5H3V12h6v5H-8v-5h6V-15h-9l-2 5h-4z"/>',1],
['<path class="ln" d="M-18 16L17 -19"/>',1],
['<path d="M-18.500 -16.500h37v32h-37z" fill="#4f4f4f" stroke="#b4b4b4" stroke-width="3"/>',1],
['<path class="ic" d="M20 -21q2 10-20 23l-7-6Q12 -20 20 -21zM-8 -1l7 6q-2 14-20 12 6-3 6-9t7-9z"/>',1],
['<circle cx="-10" cy="-2" r="14" fill="#4f4f4f" stroke="#b4b4b4" stroke-width="3"/><path class="ic" d="M26 -15L21 -18-4 10-9 18 0 15 26 -8z" stroke="#323232"/>',1],
['<path class="ic" d="M2 -20L20 -3 2 14-15 -4z"/><path class="ln" d="M-14 -2L-19 6-8 18 1 12"/>',1],
['<path class="ln" d="M-14 -9Q5 -22 16 -6q5 8 2 13" stroke-width="4"/><path class="ic" d="M-19 -18v14h14z"/><path d="M-17 7q4 15 18 14t16-13" fill="none" stroke="#b4b4b4" stroke-width="3" stroke-dasharray="3 5"/>',1],
['<path class="ln" d="M-12 -18.500h33v28h-33zM-22 -2H1v20h-23zM8 -4L17 -13M8 -14h9v9" stroke-width="2.500"/>',1],
['<path d="M-20 -12q2-8 9-6 6 3 3 12-5 18 5 16 6-4 7-12 4-14 16-5 8 7 2 14" fill="none" stroke="#b4b4b4" stroke-width="7"/><path class="ln" d="M-18 15L8 -12"/><circle class="ln" cx="-19" cy="15" r="3"/><circle class="ln" cx="8" cy="-13" r="3"/>',1],
['<path class="ln" d="M-6 -14H22V14H-6z"/><path class="ic" d="M-9 -18h7v7h-7zM18 -18h7v7h-7zM-9 11h7v7h-7zM18 11h7v7h-7zM6 -18h5v6h-5zM6 12h5v6h-5zM-23 -22V12L-13 2H2z"/>',1],
['<circle cx="-9" cy="-3" r="12" class="ln" fill="#4a4a4a"/><path class="ln" d="M-9 -15Q3 -23 13 -14q6 8 0 14M-9 9q10 6 18 2"/><path d="M-18 -2H8" stroke="#ddd" stroke-width="2" stroke-dasharray="4 3"/><path class="ic" d="M8 -6V22L15 13H27z"/>',1],
['<path class="ln" style="stroke-width:2.5" d="M-22 -18L3 -10V3L-22 18zM-22 -2L3 -4M-12 -16V13M-4 -12V8"/><path d="M5 0h8M2 5h18M-4 10h29M-12 16h41" stroke="#777" stroke-width="2.500"/>',1],
['<path class="ln" style="stroke-width:2.5" d="M-18.500 -16.500h37v32h-37zM-18 -5Q0 -14 18 2M-18 8Q0 -6 18 10M-8 -16Q4 0-10 15M4 -16Q16 0 6 15"/>',0],
['<path d="M-18.500 -16.500h37v32h-37z" fill="url(#gr)" stroke="#b4b4b4" stroke-width="3"/>',0],
['<path class="ln" d="M-1 -9L-15 6q-4 5-3 11 5 1 10-3L6 1"/><path class="ic" d="M1 -12l3-3 3 3 7-9q8-2 7 5L12 -8l3 4-4 4-4-2z"/>',1],
['<path class="ic" d="M-22 -20H-3v10l-8 10h-11z"/><circle cx="0" cy="-3" r="10" fill="#6d6d6d" stroke="#b4b4b4" stroke-width="2"/><circle cx="12" cy="5" r="10" fill="#323232" stroke="#b4b4b4" stroke-width="3"/>',0],
['<path class="ic" d="M-22 -20h5v5h-5zM-14 -20h5v5h-5zM-6 -20h5v5h-5zM-22 -12h5v5h-5zM-14 -12h5v5h-5zM-22 -4h5v5h-5zM4 -21h12v7H4z"/><path class="ln" d="M0 -12H22V16H0z"/><circle class="ln" cx="10.500" cy="3" r="6"/>',1],
['<path class="ln" d="M-22 -20V14H23"/><path class="ic" d="M-13 -3h8v17h-8zM-1 -18h9V14h-9zM12 -12h8V14h-8z"/>',1],
['<path class="ln" d="M-24 -8h10M-10 -22v10"/><path d="M-10.500 -8.500H11l7 8V16.500h-28.500z" fill="#4f4f4f" stroke="#b4b4b4" stroke-width="3"/><path class="ic" d="M9 -9l9 9H9z"/>',1],
['<path class="ln" d="M3 -12L-22 19 13 -1z"/><path class="ic" d="M8 -20L21 -9 13 1 0 -10z"/>',1],
['<path class="ic" d="M-20 -2q4-4 9 3l2 1-5-14q2-6 6-1l4 9-1-14q3-5 6 0l1 13 4-11q4-3 5 2L9 -1q6-10 10-8 2 2-4 9L9 15q-4 5-12 4-5-1-8-9z"/>',1],
['<circle class="ln" cx="-5" cy="-6" r="13"/><path d="M5 4L19 18" stroke="#b4b4b4" stroke-width="5.500"/>',0]];
document.getElementById('tg').innerHTML=T.map(([p,c])=>`<svg width="70" height="60" viewBox="-35 -30 70 60">${p}${c?'<path class="ic" d="M33 15v9h-9z"/>':''}</svg>`).join('');

// figure
let o='';
const RED='#bb1b4a',BLU='#4a6db5';
const tx=(x,y,s,z=19,a='middle',e='')=>{o+=`<text x="${x}" y="${y}" font-size="${z}" text-anchor="${a}" ${e}>${s}</text>`};
const ln=(x1,y1,x2,y2,c='#000',w=2,e='')=>{o+=`<path d="M${x1} ${y1}L${x2} ${y2}" stroke="${c}" stroke-width="${w}" fill="none" ${e}/>`};
function curve(pts,c,sm,ox,oy){
 const P=pts.map(([x,y])=>[ox+x/2.306,oy+y/3]);let d='M'+P[0];
 for(let i=0;i<P.length-1;i++){const a=P[i-1]||P[i],b=P[i],q=P[i+1],r=P[i+2]||q;
  d+=sm?`C${b[0]+(q[0]-a[0])/6} ${b[1]+(q[1]-a[1])/6} ${q[0]-(r[0]-b[0])/6} ${q[1]-(r[1]-b[1])/6} ${q[0]} ${q[1]}`:'L'+q;}
 o+=`<path d="${d}" fill="none" stroke="${c}" stroke-width="3.500" stroke-linejoin="round"/>`;
}
function frame(x,y,w,h){o+=`<rect x="${x}" y="${y}" width="${w}" height="${h}" fill="none" stroke="#000" stroke-width="2.200"/>`}
function xaxis(x,yb,inn,ty,ly){
 for(let l=1150;l<=1600;l+=50){const X=x+(l-1100)*.472,M=l%200==0;
  if(inn){if(l<1600)ln(X,yb,X,yb-(M?7:4));}else if(M)ln(X,yb,X,yb+7);
  if(M)tx(X+1,ty,l,19.200);}
 tx(x+119,ly,'Wavelength (nm)',24,'middle','textLength="182"');
}
function yin(x,y0,u,maj,min,lo,hi,fmt){
 for(let i=Math.ceil(lo/min);i<=hi/min+1e-6;i++){const v=i*min,Y=y0-v*u,M=Math.abs(v/maj-Math.round(v/maj))<1e-6;
  ln(x,Y,x+(M?7:4),Y);if(M)tx(x-8,Y+7,fmt(v),19.200,'end');}
}
const dash=(a,b,c,d)=>ln(a,b,c,d,'#858585',2,'stroke-dasharray="7 2.500"');
function yl(x,y,len,s){o+=`<text transform="translate(${x} ${y}) rotate(-90)" font-size="24" text-anchor="middle" textLength="${len}" lengthAdjust="spacingAndGlyphs">${s}</text>`}
const mu=s=>`<tspan font-family="DejaVu Sans" font-style="italic" font-size="20">μ</tspan><tspan font-family="DejaVu Sans" font-style="italic" font-size="16" dy="3">${s}</tspan><tspan dy="-3">)</tspan>`;
const A=[1420,820],C=[2060,820],E=[1420,1190];
// a
dash(1509,886.7,1745,886.7);dash(1617.500,866,1617.500,1133);
curve([[205,176],[240,176],[320,183],[380,188],[455,190],[530,192],[640,197],[749,201]],RED,1,...A);
curve([[205,718],[250,760],[305,798],[370,830],[455,858],[530,875],[640,890],[749,902]],BLU,1,...A);
frame(1509,866,236,267);xaxis(1509,1133,1,1154,1183);yin(1509,886.7,66.7,1,.2,-3.6,.2,v=>v===0?'0':Math.round(v));
// b
dash(1828,1097.300,2063,1097.300);dash(1936,866,1936,1133);
curve([[940,758],[995,715],[1047,647],[1085,565],[1120,450],[1160,285],[1180,200],[1197,175],[1213,200],[1232,290],[1250,415],[1275,565],[1305,690],[1335,765],[1370,820],[1420,850],[1483,863]],RED,1,...A);
curve([[940,823],[1000,858],[1050,884],[1070,899],[1095,904],[1122,894],[1145,855],[1165,775],[1190,600],[1210,430],[1232,285],[1250,215],[1268,199],[1290,218],[1330,285],[1375,365],[1430,437],[1483,484]],BLU,1,...A);
frame(1828,866,235.500,267);xaxis(1828,1133,1,1154,1183);yin(1828,1097.300,54.500,1,.2,-.6,4.2,v=>Math.round(v));
// c
dash(2146,1121,2382,1121);dash(2255,866,2255,1133);
curve([[199,180],[240,213],[300,250],[370,280],[449,305],[530,327],[640,349],[743,364]],BLU,1,...C);
curve([[199,880],[240,885],[350,890],[449,893],[600,897],[743,899]],RED,1,...C);
frame(2146,866,236,267);xaxis(2146,1133,1,1154,1183);yin(2146,1121,96.500,.5,.1,-.1,2.6,v=>v.toFixed(1));
// d
dash(2465,1048.300,2701,1048.300);dash(2574,866,2574,1133);
curve([[934,455],[950,500],[968,537],[985,585],[1000,612],[1008,637],[1018,638],[1030,660],[1042,664],[1058,662],[1070,635],[1087,600],[1098,570],[1107,560],[1125,508],[1140,442],[1155,385],[1170,345],[1185,316],[1203,345],[1215,420],[1232,520],[1250,630],[1268,700],[1285,740],[1302,765],[1322,776],[1350,777],[1380,766],[1422,745],[1478,737]],BLU,0,...C);
curve([[934,200],[948,260],[960,305],[972,328],[988,341],[998,353],[1018,345],[1030,327],[1048,297],[1062,284],[1076,274],[1086,278],[1097,254],[1106,257],[1120,282],[1136,320],[1150,360],[1160,415],[1170,490],[1185,580],[1200,710],[1212,790],[1225,850],[1236,885],[1244,905],[1254,875],[1264,828],[1275,812],[1300,770],[1325,730],[1350,697],[1380,666],[1415,645],[1450,635],[1478,630]],RED,0,...C);
frame(2465,866,236,267);xaxis(2465,1133,1,1154,1183);yin(2465,1048.300,39.300,2,.5,-2,4.5,v=>v<0?'−2':Math.round(v));
// e f
curve([[205,315],[255,395],[315,505],[360,595],[400,655],[430,690],[460,704],[490,698],[520,670],[560,600],[600,528],[640,455],[690,380],[749,310]],RED,1,...E);
curve([[205,376],[255,460],[315,560],[360,625],[400,668],[430,690],[458,694],[480,668],[505,595],[530,500],[555,415],[590,325],[625,260],[665,210],[705,180],[749,164]],BLU,1,...E);
frame(1509,1222.300,236,267);xaxis(1509,1489,0,1517.600,1546);
for(let i=0;i<=5;i++){const Y=1427.300-i*41;ln(1502,Y,1509,Y);tx(1495,Y+7,(i*.2).toFixed(1),19.200,'end');}
curve([[940,305],[957,300],[972,312],[1005,307],[1014,296],[1035,291],[1053,275],[1063,289],[1080,291],[1092,296],[1105,280],[1125,271],[1140,255],[1152,220],[1165,180],[1180,155],[1190,168],[1200,250],[1212,380],[1222,465],[1230,510],[1241,540],[1250,555],[1268,588],[1290,597],[1350,611],[1422,628],[1483,629]],RED,0,...E);
curve([[940,603],[950,575],[962,556],[974,548],[995,515],[1003,510],[1016,492],[1027,489],[1050,460],[1060,452],[1076,424],[1092,407],[1105,377],[1125,340],[1140,300],[1150,260],[1160,210],[1170,155],[1180,124],[1190,124],[1200,240],[1210,400],[1220,520],[1233,600],[1245,625],[1258,633],[1268,643],[1285,647],[1350,643],[1430,647],[1483,643]],BLU,0,...E);
frame(1828,1222.300,235.500,267);xaxis(1828,1489,0,1517.600,1546);
[[2,1278],[1,1348.300],[0,1418.700],['−1',1489]].forEach(([s,Y])=>{ln(1821,Y,1828,Y);tx(1814,Y+7,s,19.200,'end')});
[0,318.500].forEach(k=>{o+=`<rect x="${1534.500+k}" y="1428.700" width="202.500" height="52.600" rx="4" fill="#fff" stroke="#cfcfcf" stroke-width="2"/>`;
 ln(1540+k,1441.300,1576.500+k,1441.300,RED,3.500);ln(1540+k,1465.300,1576.500+k,1465.300,BLU,3.500);
 tx(1588+k,1447,'SRRs',16.700,'start');tx(1588+k,1471,'Equivalent material',16.700,'start','textLength="142"');});
yl(1471,1000,152,'Re('+mu('xx')+',Im('+mu('xx'));yl(1795,1000,152,'Re('+mu('yy')+',Im('+mu('yy'));yl(2099,1000,147,'Re('+mu('zz')+',Im('+mu('zz'));
const ka='<tspan font-family="DejaVu Sans" font-style="italic" font-size="20">κ</tspan>';
yl(2422,999,116,`Re(${ka}),Im(${ka})`);yl(1454.500,1355.500,139,'Transmission');yl(1778,1355,284,'Faraday Rotation (deg/cm)');
tx(2465,859.500,'×10',19.200,'start');tx(2500,846,'−3',14,'start');tx(1828,1216,'×10',19.200,'start');tx(1863,1202,'4',14,'start');
[['a',1519,907],['b',1837,892],['c',2155,887],['d',2474,891],['e',1519,1250],['f',1837,1250]].forEach(([s,x,y])=>tx(x,y,s,28,'start','class="pl"'));
// relations written over c and d: letters as text, primes and signs as strokes
function rel(x,y,s,w){
 tx(x,y,s,28,'start','class="eq"');ln(x+w,y-11,x+w+18,y-11,'#000',2.200);ln(x+w,y-5,x+w+18,y-5,'#000',2.200);
 tx(x+w+21,y,s,28,'start','class="eq"');ln(x+w+39,y-15,x+w+42,y-24);
 ln(x+w+50,y-8,x+w+68,y-8,'#000',2.200);tx(x+w+72,y,'j',28,'start','class="eq"');tx(x+w+81,y,s,28,'start','class="eq"');
 ln(x+w+99,y-20,x+w+102,y-29);ln(x+w+105,y-20,x+w+108,y-29);}
rel(2241,1083,'μ',20);rel(2566,900,'κ',17);

// field maps
o+=`<defs><clipPath id="cg"><path d="M2146 1238h236v236h-236z"/></clipPath><clipPath id="ch"><path d="M2465 1238h236v236h-236z"/></clipPath>
<filter id="bl" x="-50%" y="-50%" width="200%" height="200%"><feGaussianBlur stdDeviation="12"/></filter><filter id="bs" x="-50%" y="-50%" width="200%" height="200%"><feGaussianBlur stdDeviation="4"/></filter></defs>
<g clip-path="url(#cg)"><path d="M2146 1238h236v236h-236z" fill="#5e4fa2"/><g filter="url(#bs)" fill="none" stroke="#3a8fbd"><path d="M2204 1345V1320q0-12 12-12h96q14 0 14 12v25" stroke-width="10"/><path d="M2242 1400V1372h45v28" stroke-width="7"/><path d="M2206 1402q12 8 32 2M2292 1404q22 6 34-2" stroke-width="8"/></g></g>
<g clip-path="url(#ch)"><path d="M2465 1238h236v236h-236z" fill="#3880ba"/><g filter="url(#bl)"><ellipse cx="2465" cy="1356" rx="50" ry="80" fill="#4fb0a8"/><ellipse cx="2701" cy="1356" rx="50" ry="80" fill="#4fb0a8"/><ellipse cx="2583" cy="1238" rx="60" ry="24" fill="#5e4fa2"/><ellipse cx="2583" cy="1474" rx="80" ry="30" fill="#5e4fa2"/>
<ellipse cx="2583" cy="1356" rx="76" ry="64" fill="#7fcca4"/><ellipse cx="2583" cy="1350" rx="48" ry="48" fill="#e2f29a"/><ellipse cx="2583" cy="1390" rx="42" ry="24" fill="#f6f7a8"/></g>
<g filter="url(#bs)"><circle cx="2524" cy="1402" r="10" fill="#3a70b5"/><circle cx="2642" cy="1402" r="10" fill="#3a70b5"/><circle cx="2524" cy="1316" r="7" fill="#4a90b8"/><circle cx="2642" cy="1316" r="7" fill="#4a90b8"/><ellipse cx="2583" cy="1366" rx="28" ry="15" fill="#f08a4a"/><ellipse cx="2583" cy="1387" rx="24" ry="12" fill="#fee590"/><circle cx="2566" cy="1367" r="8" fill="#b52040"/><circle cx="2601" cy="1367" r="8" fill="#b52040"/></g></g>`;
function arrow(x,y,dx,dy,c,w){const L=Math.hypot(dx,dy)||1,u=dx/L,v=dy/L,h=Math.min(L*.6,2+w*3),q=.42*h,X=x+dx,Y=y+dy,bx=X-u*h,by=Y-v*h;
 o+=`<path d="M${x.toFixed(1)} ${y.toFixed(1)}L${bx.toFixed(1)} ${by.toFixed(1)}" stroke="${c}" stroke-width="${w}"/><path fill="${c}" d="M${X.toFixed(1)} ${Y.toFixed(1)}L${(bx-v*q).toFixed(1)} ${(by+u*q).toFixed(1)} ${(bx+v*q).toFixed(1)} ${(by-u*q).toFixed(1)}z"/>`}
const col=m=>m<.45?'#fffff4':m<.66?'#fbf7cf':m<.76?'#ecd9ae':'#d3a08c';
for(let j=0;j<30;j++)for(let i=0;i<30;i++){
 const x=2153.700+i*7.620,y=1245+j*7.620,dx=x-2264.500;
 // displacement-current map: clockwise arch, plus the two lower arms
 let vx=0,vy=0,m=0;const r=Math.pow(Math.pow(Math.abs(dx),2.6)+Math.pow(Math.abs(y-1366),2.6),1/2.6),ed=Math.exp(-Math.pow((r-60)/12,2));
 if(y<1352&&ed>.1){const rr=Math.hypot(dx,y-1366);vx=-(y-1366)/rr;vy=dx/rr;m=ed*(.62+.2*Math.min(1,Math.abs(dx)/60))*(y>1330?.65:1);}
 else if(y>1350&&y<1412&&Math.abs(dx)>19&&Math.abs(dx)<63){const t=(y-1350)/62;const k=1-Math.abs(Math.abs(dx)-36)/50;
  if(t<.72){vx=-.6;vy=-.85;}else{vx=.8;vy=dx<0?.65:-.65}m=k*(.4+.3*t);}
 if(m>.12)arrow(x-vx*m*9,y-vy*m*9,vx*m*22,vy*m*22,col(m),2.200);
 else o+=`<rect x="${x-.9}" y="${y-.9}" width="1.800" height="1.800" fill="#ece8fa"/>`;
 // magnetic map: fan rising from the gap, weak return flux at the sides
 const X=x+318.700,ex=X-2583,ey=y-1378,ae=Math.abs(ex);
 if(y>1306&&y<1408&&ae<60&&!(ae<20&&y>1378)&&!(ae>50&&(y<1325||y>1392))){
  const up=Math.max(0,-ey),sp=ae<26?.12*ex*(ey>-22?2:1):ex*.9;
  let vy2=-(up+(ae<26?14:4)),al=Math.hypot(sp,vy2),mm=ae<28?.52+.5*Math.exp(-up/30):1.05*Math.exp(-Math.hypot(ae-20,up*.6)/38);
  if(mm>.2){const l=6+Math.min(mm,.8)*15;arrow(X-sp/al*l/2,y-vy2/al*l/2,sp/al*l,vy2/al*l,mm<.4?'#ecd9ae':mm<.72?'#cf9a88':mm<.86?'#8d4f50':'#45181a',2);}
  else arrow(X,y+2,0,-5,'#f3ebbd',1);}
 else{const f=Math.min(1,ae/110)*Math.exp(-Math.pow((y-1356)/95,2));
  if(f>.18)arrow(X,y-2-f*1.200,0,4+f*3,'#f3ebbd',1);else o+=`<rect x="${X-.9}" y="${y-.9}" width="1.800" height="1.800" fill="#e8eefa"/>`;}
}
const G=(a,b,c,d,k,w)=>arrow(2080+a/2.376,1190+b/3,(c-a)/2.376,(d-b)/3,k,w);
G(250,430,357,270,'#875050',2.500);G(285,440,375,280,'#8d5450',2.500);G(262,495,312,318,'#b07468',2.500);G(272,497,330,370,'#cf9385',2.500);G(325,385,428,318,'#cf9385',2.500);
G(520,268,628,428,'#804848',2.500);G(506,288,600,400,'#cf9385',2.500);G(470,320,575,380,'#e0c09a',2.500);G(440,340,560,375,'#cf9385',2.500);
G(300,610,402,686,'#cf9385',2.500);G(468,690,560,620,'#c98b7d',2.500);
G(500,682,590,615,'#ecdcae',2.500);G(290,620,370,682,'#f3e8bd',2.500);
G(417,703,585,590,'#4d2522',2.200);G(295,590,460,706,'#1c0808',2.200);
[0,318.500].forEach(k=>{const a=2201+k,b=2328.500+k,c=2242.500+k,d=2286.500+k;
 o+=`<path d="M${a+6} 1305.300H${b-6}q6 0 6 6V1400q0 6-6 6H${d+5}q-5 0-5-6V1375q0-5-5-5H${c+5}q-5 0-5 5V1406.300H${a+6}q-6 0-6-6V1311q0-6 6-6z" fill="none" stroke="#000" stroke-width="3.800" stroke-dasharray="11 5"/>`;
 frame(2146+k,1238.300,236,235.500);
 [['p/2',1238.300],['0',1356],['-p/2',1473.700]].forEach(([s,Y])=>{ln(2139+k,Y,2146+k,Y);tx(2132+k,Y+7,s,19.500,'end')});
 [['-p/2',2146],['0',2264],['p/2',2382]].forEach(([s,X])=>{ln(X+k,1474,X+k,1481);tx(X+k,1502,s,19.500)});
 tx(2264+k,1532,'X',24);});
tx(2156,1268,'g',28,'start','class="pl wt"');tx(2475,1268,'h',28,'start','class="pl wt"');
tx(2661,1267,'|H|',27,'start','class="wt" font-weight="700" textLength="30" lengthAdjust="spacingAndGlyphs"');
tx(2288,1271,'|<tspan font-style="normal">Δ</tspan>r×J<tspan dy="5" font-size="17">d</tspan><tspan dy="-5">|</tspan>',27,'start','class="eq wt" textLength="84" lengthAdjust="spacingAndGlyphs"');
ln(2313,1254,2322,1254,'#fff',1.800);ln(2346,1250,2356,1250,'#fff',1.800);o+='<path d="M2320 1251l4 3-4 3zM2353 1247l4 3-4 3z" fill="#fff"/>';
document.getElementById('fig').innerHTML=o;
</script>
</body>
</html>
